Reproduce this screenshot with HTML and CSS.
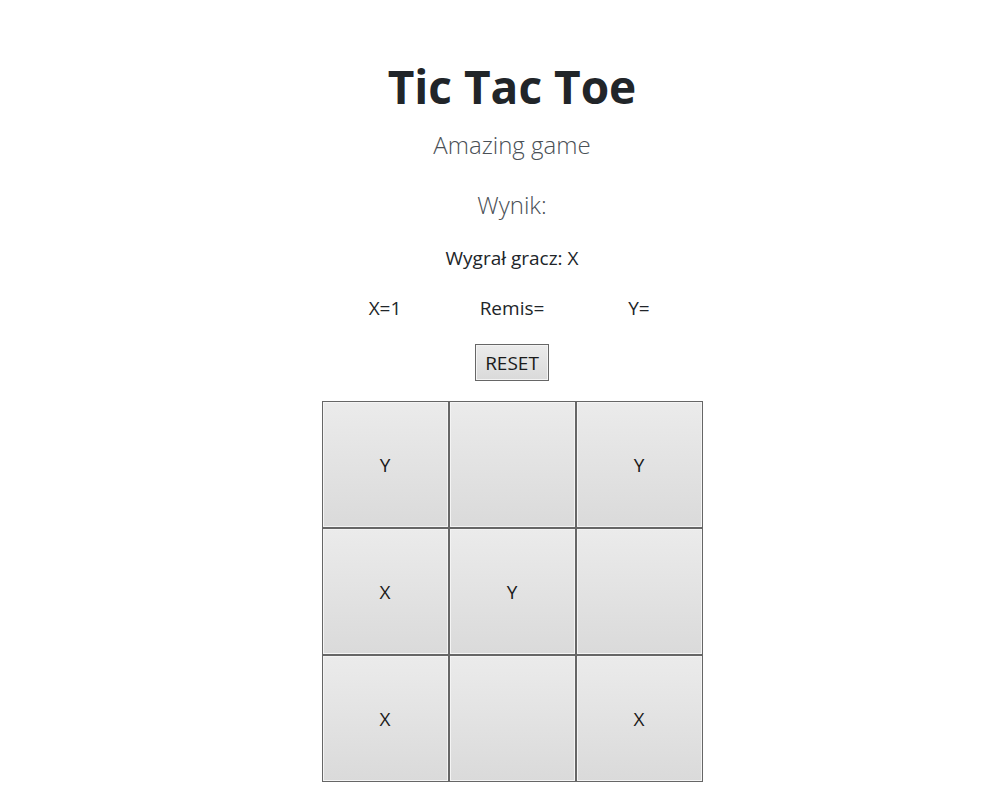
FILE: index.html
```html
<!DOCTYPE html>
<html lang="pl">
<head>
<meta charset="utf-8">
<title>Tic Tac Toe</title>
<link rel="stylesheet" href="styles.css">
</head>
<body>
<main class="app">
  <h1 class="title">Tic Tac Toe</h1>
  <p class="lead subtitle">Amazing game</p>
  <p class="lead score-head">Wynik:</p>
  <p class="winner">Wygrał gracz: X</p>
  <div class="scores">
    <span class="score">X=1</span>
    <span class="score">Remis=</span>
    <span class="score">Y=</span>
  </div>
  <button class="btn reset">RESET</button>
  <div class="board">
    <button class="btn cell">Y</button>
    <button class="btn cell"></button>
    <button class="btn cell">Y</button>
    <button class="btn cell">X</button>
    <button class="btn cell">Y</button>
    <button class="btn cell"></button>
    <button class="btn cell">X</button>
    <button class="btn cell"></button>
    <button class="btn cell">X</button>
  </div>
</main>
</body>
</html>
```
FILE: styles.css
```css
html, body {
  margin: 0;
  padding: 0;
  background: #ffffff;
}
body {
  font-family: "Open Sans", "Noto Sans", sans-serif;
  color: #212529;
}
.app {
  display: flex;
  flex-direction: column;
  align-items: center;
  padding-left: 24px;
  padding-top: 56px;
}
.title {
  margin: 0;
  font-size: 46px;
  font-weight: 700;
  line-height: 60px;
  color: #212529;
}
.lead {
  margin: 0;
  font-size: 24px;
  font-weight: 300;
  line-height: 30px;
  color: #4a5056;
}
.subtitle {
  margin-top: 14px;
}
.score-head {
  margin-top: 30px;
}
.winner {
  margin: 26px 0 0;
  font-size: 19px;
  line-height: 24px;
}
.scores {
  margin-top: 26px;
  display: grid;
  grid-template-columns: repeat(3, 127px);
  font-size: 19px;
  line-height: 24px;
  text-align: center;
}
.btn {
  font-family: inherit;
  font-size: 19px;
  color: #1a1a1a;
  border: 1px solid #666666;
  background: linear-gradient(#ebebeb, #dadada);
  box-shadow: inset 0 0 0 1px #f4f4f4;
  padding: 0;
  margin: 0;
}
.reset {
  margin-top: 24px;
  width: 74px;
  height: 37px;
}
.board {
  margin-top: 20px;
  display: grid;
  grid-template-columns: repeat(3, 127px);
  grid-auto-rows: 127px;
}
.cell {
  width: 127px;
  height: 127px;
}
```
